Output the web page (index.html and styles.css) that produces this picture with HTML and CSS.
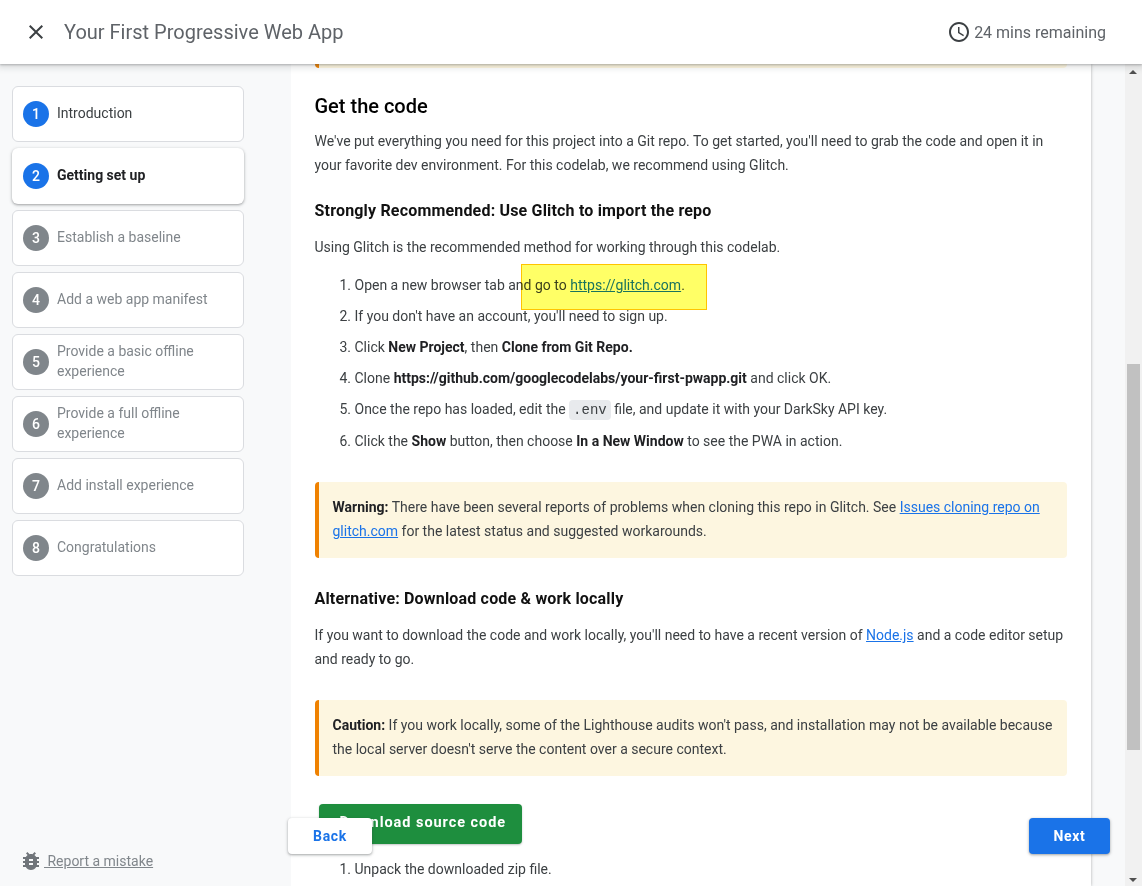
FILE: index.html
```html
<!DOCTYPE html>
<html lang="en">
<head>
<meta charset="utf-8">
<title>Your First Progressive Web App</title>
<link rel="stylesheet" href="styles.css">
</head>
<body>
<header class="topbar">
  <svg class="icon close" viewBox="0 0 24 24"><path d="M19 6.41L17.59 5 12 10.59 6.41 5 5 6.41 10.59 12 5 17.59 6.41 19 12 13.41 17.59 19 19 17.59 13.41 12z"/></svg>
  <h1 class="title">Your First Progressive Web App</h1>
  <div class="time">
    <svg class="icon clock" viewBox="0 0 24 24"><path d="M11.99 2C6.47 2 2 6.48 2 12s4.47 10 9.99 10C17.52 22 22 17.52 22 12S17.52 2 11.99 2zM12 20c-4.42 0-8-3.58-8-8s3.58-8 8-8 8 3.58 8 8-3.58 8-8 8zm.5-13H11v6l5.25 3.15.75-1.23-4.5-2.67z"/></svg>
    <span>24 mins remaining</span>
  </div>
</header>
<div class="body">
  <aside class="sidebar">
    <ol class="steps">
      <li class="step done"><span class="num">1</span><span class="label">Introduction</span></li>
      <li class="step current"><span class="num">2</span><span class="label">Getting set up</span></li>
      <li class="step"><span class="num">3</span><span class="label">Establish a baseline</span></li>
      <li class="step"><span class="num">4</span><span class="label">Add a web app manifest</span></li>
      <li class="step"><span class="num">5</span><span class="label">Provide a basic offline experience</span></li>
      <li class="step"><span class="num">6</span><span class="label">Provide a full offline experience</span></li>
      <li class="step"><span class="num">7</span><span class="label">Add install experience</span></li>
      <li class="step"><span class="num">8</span><span class="label">Congratulations</span></li>
    </ol>
    <a class="report" href="#"><svg class="bug" viewBox="0 0 24 24"><path d="M20 8h-2.81c-.45-.78-1.07-1.45-1.82-1.96L17 4.41 15.59 3l-2.17 2.17C12.96 5.06 12.49 5 12 5c-.49 0-.96.06-1.41.17L8.41 3 7 4.41l1.62 1.63C7.88 6.55 7.26 7.22 6.81 8H4v2h2.09c-.05.33-.09.66-.09 1v1H4v2h2v1c0 .34.04.67.09 1H4v2h2.81c1.04 1.79 2.97 3 5.19 3s4.15-1.21 5.19-3H20v-2h-2.09c.05-.33.09-.66.09-1v-1h2v-2h-2v-1c0-.34-.04-.67-.09-1H20V8zm-6 8h-4v-2h4v2zm0-4h-4v-2h4v2z"/></svg><span class="report-text"> Report a mistake</span></a>
  </aside>
  <main class="main">
    <article class="card">
      <div class="callout-stub"></div>
      <h2 class="h2">Get the code</h2>
      <p class="para">We've put everything you need for this project into a Git repo. To get started, you'll need to grab the code and open it in your favorite dev environment. For this codelab, we recommend using Glitch.</p>
      <h3 class="h3">Strongly Recommended: Use Glitch to import the repo</h3>
      <p class="para">Using Glitch is the recommended method for working through this codelab.</p>
      <ol class="list">
        <li>Open a new browser tab and go to <a href="#">https://glitch.com</a>.</li>
        <li>If you don't have an account, you'll need to sign up.</li>
        <li>Click <b>New Project</b>, then <b>Clone from Git Repo.</b></li>
        <li>Clone <b>https://github.com/googlecodelabs/your-first-pwapp.git</b> and click OK.</li>
        <li>Once the repo has loaded, edit the <code class="code">.env</code> file, and update it with your DarkSky API key.</li>
        <li>Click the <b>Show</b> button, then choose <b>In a New Window</b> to see the PWA in action.</li>
      </ol>
      <aside class="callout callout-first"><b>Warning:</b> There have been several reports of problems when cloning this repo in Glitch. See <a href="#">Issues cloning repo on glitch.com</a> for the latest status and suggested workarounds.</aside>
      <h3 class="h3 h3-alt">Alternative: Download code &amp; work locally</h3>
      <p class="para">If you want to download the code and work locally, you'll need to have a recent version of <a href="#">Node.js</a> and a code editor setup and ready to go.</p>
      <aside class="callout callout-second"><b>Caution:</b> If you work locally, some of the Lighthouse audits won't pass, and installation may not be available because the local server doesn't serve the content over a secure context.</aside>
      <a class="download" href="#">Download source code</a>
      <ol class="list list-last">
        <li>Unpack the downloaded zip file.</li>
      </ol>
    </article>
  </main>
  <div class="scrollbar">
    <span class="arrow arrow-up"></span>
    <span class="thumb"></span>
    <span class="arrow arrow-down"></span>
  </div>
</div>
<div class="highlight"></div>
<a class="btn btn-back" href="#">Back</a>
<a class="btn btn-next" href="#">Next</a>
</body>
</html>
```
FILE: styles.css
```css
* { box-sizing: border-box; }
html, body { height: 100%; }
body {
  margin: 0;
  height: 886px;
  overflow: hidden;
  display: flex;
  flex-direction: column;
  font-family: Roboto, "Liberation Sans", sans-serif;
  font-size: 14px;
  color: #3c4043;
  background: #f8f9fa;
}
.topbar {
  height: 64px;
  flex: none;
  display: flex;
  align-items: center;
  padding: 0 36px 0 24px;
  background: #fff;
  position: relative;
  z-index: 3;
  box-shadow: 0 1px 2px rgba(60,64,67,.3), 0 2px 6px 2px rgba(60,64,67,.15);
}
.icon { width: 24px; height: 24px; fill: #3c4043; flex: none; }
.title {
  margin: 0 0 0 16px;
  flex: 1;
  font-size: 20px;
  font-weight: 400;
  color: #5f6368;
}
.time {
  display: flex;
  align-items: center;
  gap: 3px;
  font-size: 16px;
  color: #5f6368;
}
.body { flex: 1; display: flex; min-height: 0; }
.sidebar {
  width: 290.5px;
  flex: none;
  display: flex;
  flex-direction: column;
  justify-content: space-between;
  padding: 22px 46.5px 13px 12px;
}
.steps {
  list-style: none;
  margin: 0;
  padding: 0;
  display: flex;
  flex-direction: column;
  gap: 6px;
}
.step {
  height: 56px;
  display: flex;
  align-items: center;
  gap: 8px;
  padding: 0 10px;
  background: #fff;
  border: 1px solid #dadce0;
  border-radius: 6px;
  color: #80868b;
  line-height: 20px;
}
.label { margin-bottom: 2px; }
.num {
  width: 26px;
  height: 26px;
  flex: none;
  display: flex;
  align-items: center;
  justify-content: center;
  border-radius: 50%;
  background: #80868b;
  color: #fff;
  font-weight: 500;
  font-size: 14px;
}
.done .num, .current .num { background: #1a73e8; }
.done { color: #3c4043; }
.current {
  color: #202124;
  font-weight: 700;
  border-color: transparent;
  box-shadow: 0 1px 2px rgba(60,64,67,.3), 0 1px 3px 1px rgba(60,64,67,.15);
}
.report {
  display: flex;
  align-items: center;
  margin-left: 7px;
  color: #80868b;
  line-height: 24px;
}
.bug { width: 24px; height: 24px; fill: #70757a; flex: none; }
.report-text { white-space: pre; margin-left: 1px; }
.main {
  width: 834.5px;
  flex: none;
  overflow: hidden;
}
.card {
  width: 800px;
  min-height: 100%;
  padding: 0 24px;
  background: #fff;
  line-height: 24px;
  box-shadow: 0 0 3px rgba(60,64,67,.4);
}
.callout-stub {
  height: 4px;
  background: #fef7e0;
  border-left: 4px solid #ef8100;
  border-radius: 0 0 4px 4px;
}
.h2 {
  margin: 26px 0 0;
  font-size: 20px;
  font-weight: 500;
  line-height: 24px;
  color: #000;
}
.h3 {
  margin: 22px 0 0;
  font-size: 16px;
  font-weight: 700;
  letter-spacing: .18px;
  line-height: 24px;
  color: #111;
}
.h3-alt { margin-top: 29px; }
.para { margin: 12px 0 0; }
.h2 + .para { margin-top: 11px; }
.list {
  margin: 14px 0 0;
  padding-left: 40px;
}
.list li { margin-bottom: 7px; }
.list b { color: #202124; }
a { color: #1a73e8; }
.code {
  font-family: "Liberation Mono", "DejaVu Sans Mono", monospace;
  font-size: 14px;
  padding: 2px 4px;
  background: #e8eaed;
  border-radius: 4px;
  color: #3c4043;
}
.callout {
  display: block;
  padding: 13px 14px 15px 14px;
  background: #fdf6e0;
  border-left: 4px solid #ef8100;
  border-radius: 4px;
}
.callout b { color: #202124; }
.callout-first { margin-top: 29px; }
.callout-second { margin-top: 29px; }
.download {
  display: inline-block;
  height: 40px;
  margin: 28px 0 0 4px;
  padding: 0 16px 0 21px;
  line-height: 37px;
  background: #1e8e3e;
  color: #fff;
  font-size: 14.5px;
  font-weight: 700;
  letter-spacing: .95px;
  text-decoration: none;
  border-radius: 4px;
  box-shadow: 0 1px 2px rgba(60,64,67,.3);
}
.list-last { margin-top: 13px; }
.scrollbar {
  width: 17px;
  flex: none;
  background: #f1f1f1;
  position: relative;
}
.thumb {
  position: absolute;
  top: 300px;
  left: 2px;
  width: 13px;
  height: 386px;
  background: #c1c1c1;
}
.arrow { position: absolute; left: 4px; width: 0; height: 0; border: 4px solid transparent; }
.arrow-up { top: 2px; border-bottom-color: #505050; }
.arrow-down { bottom: 0; border-top-color: #505050; }
.highlight {
  position: absolute;
  left: 521px;
  top: 264px;
  width: 186px;
  height: 46px;
  background: #ffff66;
  border: 1px solid #ffc400;
  mix-blend-mode: multiply;
}
.btn {
  position: absolute;
  top: 818px;
  height: 36px;
  display: flex;
  align-items: center;
  justify-content: center;
  font-weight: 700;
  letter-spacing: .7px;
  text-decoration: none;
  border-radius: 4px;
  box-shadow: 0 1px 2px rgba(60,64,67,.3), 0 1px 3px 1px rgba(60,64,67,.15);
  z-index: 2;
}
.btn-back { left: 288px; width: 84px; background: #fff; color: #1a73e8; }
.btn-next { left: 1029px; width: 81px; background: #1a73e8; color: #fff; }
```
